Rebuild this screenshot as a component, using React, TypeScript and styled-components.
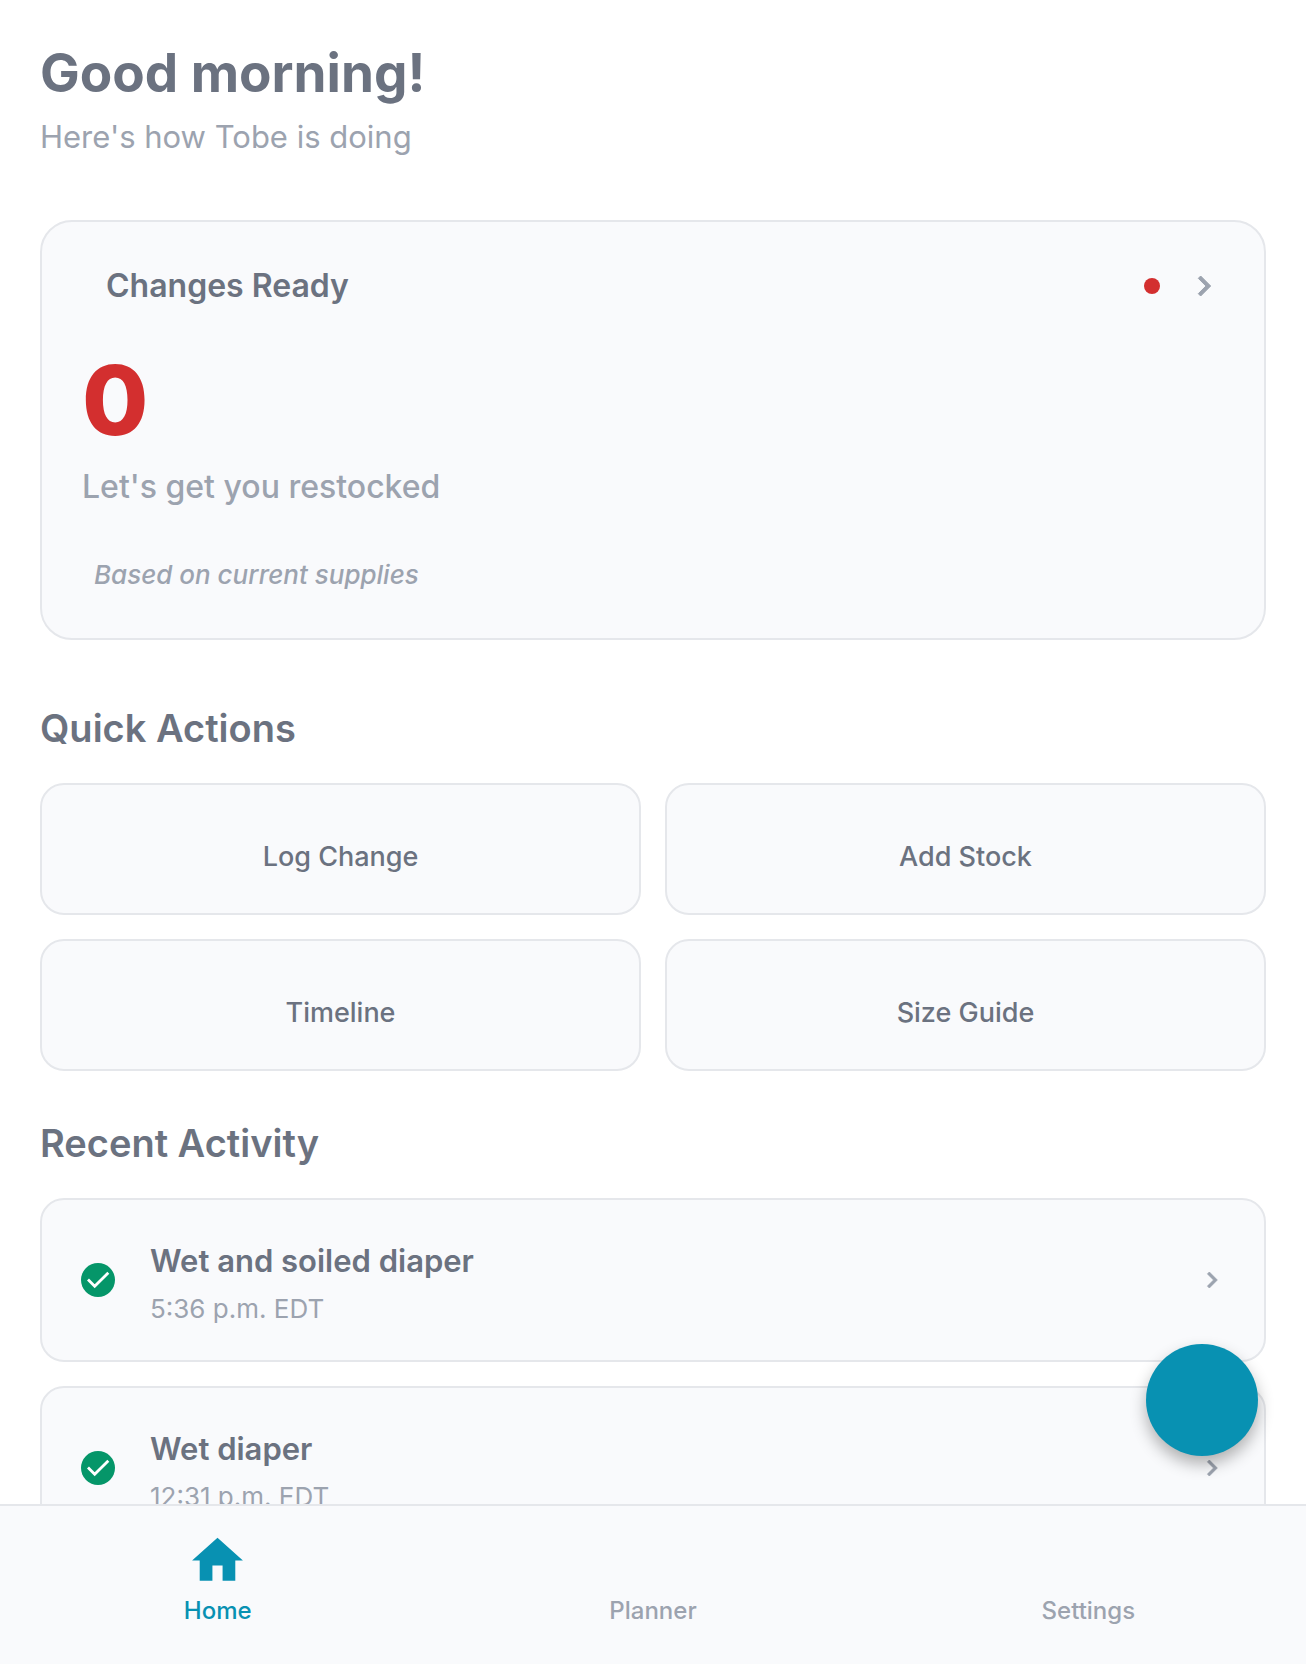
import React from "react";
import styled, { createGlobalStyle } from "styled-components";

const color = {
  text: "#6b7280",
  muted: "#9ca3af",
  surface: "#f9fafc",
  border: "#e5e7eb",
  accent: "#0891b2",
  danger: "#d32f2f",
  success: "#059669",
};

const GlobalStyle = createGlobalStyle`
  *, *::before, *::after { box-sizing: border-box; }
  body {
    margin: 0;
    background: #ffffff;
    color: ${color.text};
    font-family: Inter, "Liberation Sans", sans-serif;
    -webkit-font-smoothing: antialiased;
  }
  h1, h2, h3, p, ul { margin: 0; padding: 0; }
  button { font: inherit; color: inherit; cursor: pointer; }
`;

const Shell = styled.div`
  position: relative;
  display: flex;
  flex-direction: column;
  height: 100vh;
`;

const Main = styled.main`
  flex: 1;
  min-height: 0;
  overflow-y: auto;
  scrollbar-width: none;
  padding: 40px;
`;

const Title = styled.h1`
  font-size: 53px;
  line-height: 66px;
  font-weight: 700;
`;

const Subtitle = styled.p`
  margin-top: 8px;
  font-size: 31px;
  line-height: 46px;
  color: ${color.muted};
`;

const SupplyCard = styled.button`
  display: block;
  width: 100%;
  margin-top: 60px;
  padding: 40px;
  text-align: left;
  background: ${color.surface};
  border: 2px solid ${color.border};
  border-radius: 32px;
`;

const SupplyHeader = styled.span`
  display: flex;
  align-items: center;
  padding-left: 24px;
  gap: 24px;
`;

const SupplyName = styled.span`
  flex: 1;
  font-size: 32px;
  line-height: 48px;
  font-weight: 600;
`;

const StatusDot = styled.span`
  width: 16px;
  height: 16px;
  border-radius: 50%;
  background: ${color.danger};
`;

const Count = styled.span`
  display: block;
  margin-top: 32px;
  font-size: 96px;
  line-height: 116px;
  font-weight: 800;
  color: ${color.danger};
`;

const SupplyMessage = styled.span`
  display: block;
  margin-top: 8px;
  font-size: 32px;
  line-height: 42px;
  font-weight: 500;
  color: ${color.muted};
`;

const SupplyNote = styled.span`
  display: block;
  margin-top: 44px;
  padding-left: 12px;
  font-size: 26px;
  line-height: 46px;
  font-weight: 500;
  font-style: italic;
  color: ${color.muted};
`;

const Section = styled.section<{ $gap: number }>`
  margin-top: ${(p) => p.$gap}px;
`;

const SectionTitle = styled.h2`
  margin-bottom: 30px;
  font-size: 38px;
  line-height: 49px;
  font-weight: 600;
`;

const ActionGrid = styled.div`
  display: grid;
  grid-template-columns: 1fr 1fr;
  gap: 24px;
`;

const ActionButton = styled.button`
  padding: 56px 32px 40px;
  && {
    font-size: 27px;
    line-height: 32px;
    font-weight: 500;
  }
  background: ${color.surface};
  border: 2px solid ${color.border};
  border-radius: 24px;
`;

const ActivityList = styled.ul`
  display: grid;
  gap: 24px;
  list-style: none;
`;

const ActivityRow = styled.button`
  display: flex;
  align-items: center;
  gap: 32px;
  width: 100%;
  padding: 36px;
  text-align: left;
  background: ${color.surface};
  border: 2px solid ${color.border};
  border-radius: 24px;
`;

const ActivityText = styled.span`
  flex: 1;
  display: flex;
  flex-direction: column;
  gap: 8px;
`;

const ActivityName = styled.span`
  font-size: 31px;
  line-height: 50px;
  font-weight: 600;
`;

const ActivityTime = styled.span`
  font-size: 26px;
  line-height: 30px;
  color: ${color.muted};
`;

const Icon = styled.svg<{ $size: number }>`
  display: block;
  flex: none;
  width: ${(p) => p.$size}px;
  height: ${(p) => p.$size}px;
  fill: currentColor;
`;

const MutedIcon = styled(Icon)`
  color: ${color.muted};
`;

const Fab = styled.button`
  position: absolute;
  right: 48px;
  bottom: 208px;
  width: 112px;
  height: 112px;
  border: 0;
  border-radius: 50%;
  background: ${color.accent};
  box-shadow: 0 8px 16px rgba(0, 0, 0, 0.3);
`;

const TabBar = styled.nav`
  display: flex;
  height: 160px;
  background: ${color.surface};
  border-top: 2px solid ${color.border};
`;

const Tab = styled.a<{ $active?: boolean }>`
  flex: 1;
  display: flex;
  flex-direction: column;
  align-items: center;
  gap: 4px;
  padding-top: 24px;
  font-size: 24px;
  line-height: 32px;
  font-weight: 500;
  text-decoration: none;
  color: ${(p) => (p.$active ? color.accent : color.muted)};
`;

const TabIcon = styled.span`
  width: 61px;
  height: 61px;
`;

function Chevron({ size }: { size: number }) {
  return (
    <MutedIcon $size={size} viewBox="0 0 24 24" aria-hidden="true">
      <path
        d="M10 6 8.59 7.41 13.17 12l-4.58 4.59L10 18l6-6z"
        stroke="currentColor"
        strokeWidth="0.6"
        strokeLinejoin="round"
      />
    </MutedIcon>
  );
}

function CheckCircle() {
  return (
    <Icon $size={40} viewBox="0 0 40 40" aria-hidden="true">
      <circle cx="20" cy="20" r="17" fill={color.success} />
      <path d="m10 19.5 6.7 6.7L30.3 12.7" fill="none" stroke="#fff" strokeWidth="2.8" />
    </Icon>
  );
}

function HomeIcon() {
  return (
    <Icon $size={61} viewBox="0 0 24 24" aria-hidden="true">
      <path d="M10 20v-6h4v6h5v-8h3L12 3 2 12h3v8z" />
    </Icon>
  );
}

const actions = ["Log Change", "Add Stock", "Timeline", "Size Guide"];

const activity = [
  { name: "Wet and soiled diaper", time: "5:36 p.m. EDT" },
  { name: "Wet diaper", time: "12:31 p.m. EDT" },
];

const tabs = [
  { label: "Home", href: "#home", active: true },
  { label: "Planner", href: "#planner", active: false },
  { label: "Settings", href: "#settings", active: false },
];

export default function App() {
  return (
    <Shell>
      <GlobalStyle />
      <Main>
        <header>
          <Title>Good morning!</Title>
          <Subtitle>Here's how Tobe is doing</Subtitle>
        </header>

        <SupplyCard type="button">
          <SupplyHeader>
            <SupplyName>Changes Ready</SupplyName>
            <StatusDot />
            <Chevron size={40} />
          </SupplyHeader>
          <Count>0</Count>
          <SupplyMessage>Let's get you restocked</SupplyMessage>
          <SupplyNote>Based on current supplies</SupplyNote>
        </SupplyCard>

        <Section $gap={64}>
          <SectionTitle>Quick Actions</SectionTitle>
          <ActionGrid>
            {actions.map((label) => (
              <ActionButton type="button" key={label}>
                {label}
              </ActionButton>
            ))}
          </ActionGrid>
        </Section>

        <Section $gap={48}>
          <SectionTitle>Recent Activity</SectionTitle>
          <ActivityList>
            {activity.map((item) => (
              <li key={item.name}>
                <ActivityRow type="button">
                  <CheckCircle />
                  <ActivityText>
                    <ActivityName>{item.name}</ActivityName>
                    <ActivityTime>{item.time}</ActivityTime>
                  </ActivityText>
                  <Chevron size={32} />
                </ActivityRow>
              </li>
            ))}
          </ActivityList>
        </Section>
      </Main>

      <Fab type="button" aria-label="Add" />

      <TabBar>
        {tabs.map((tab) => (
          <Tab
            key={tab.label}
            href={tab.href}
            $active={tab.active}
            aria-current={tab.active ? "page" : undefined}
          >
            <TabIcon>{tab.active && <HomeIcon />}</TabIcon>
            {tab.label}
          </Tab>
        ))}
      </TabBar>
    </Shell>
  );
}
